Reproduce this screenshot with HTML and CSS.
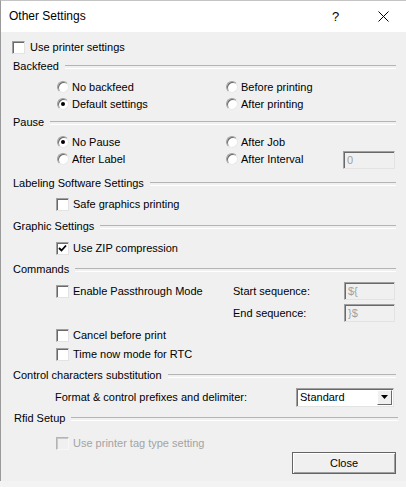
FILE: index.html
```html
<!DOCTYPE html>
<html lang="en">
    <head>
        <meta charset="UTF-8" />
        <title>Other Settings</title>
        <link rel="stylesheet" href="styles.css">
    </head>
    <body>
        <div class="window">
            <div class="titlebar">
                <span class="title">Other Settings</span>
                <span class="help">?</span>
                <svg class="close-x" width="11" height="11" viewBox="0 0 11 11">
                    <path d="M0.5 0.5 L10.5 10.5 M10.5 0.5 L0.5 10.5" stroke="#000" stroke-width="1" fill="none" />
                </svg>
            </div>
            <div class="content">
                <div class="check top-check"><span class="box"></span>Use printer settings</div>

                <div class="section mt1">Backfeed</div>
                <div class="radio-grid mt3">
                    <div class="opt"><span class="radio"></span>No backfeed</div>
                    <div class="opt"><span class="radio"></span>Before printing</div>
                    <div class="opt"><span class="radio on"></span>Default settings</div>
                    <div class="opt"><span class="radio"></span>After printing</div>
                </div>

                <div class="section mt1">Pause</div>
                <div class="radio-grid pause mt2">
                    <div class="opt"><span class="radio on"></span>No Pause</div>
                    <div class="opt"><span class="radio"></span>After Job</div>
                    <div></div>
                    <div class="opt"><span class="radio"></span>After Label</div>
                    <div class="opt"><span class="radio"></span>After Interval</div>
                    <div class="field">0</div>
                </div>

                <div class="section mt7">Labeling Software Settings</div>
                <div class="check indent mt3"><span class="box"></span>Safe graphics printing</div>

                <div class="section mt4">Graphic Settings</div>
                <div class="check indent mt4"><span class="box checked">
                    <svg width="9" height="9" viewBox="0 0 9 9"><path d="M1 4 L3.5 6.5 L8 1.5" stroke="#000" stroke-width="1.8" fill="none" /></svg>
                </span>Use ZIP compression</div>

                <div class="section mt3">Commands</div>
                <div class="cmd-grid mt4">
                    <div class="check"><span class="box"></span>Enable Passthrough Mode</div>
                    <div class="seq-label">Start sequence:</div>
                    <div class="field">${</div>
                    <div></div>
                    <div class="seq-label">End sequence:</div>
                    <div class="field">}$</div>
                </div>
                <div class="check indent mt4"><span class="box"></span>Cancel before print</div>
                <div class="check indent mt1"><span class="box"></span>Time now mode for RTC</div>

                <div class="section mt3">Control characters substitution</div>
                <div class="format-row mt4">
                    <span>Format &amp; control prefixes and delimiter:</span>
                    <div class="select">
                        <span class="select-value">Standard</span>
                        <span class="select-btn">
                            <svg width="7" height="4" viewBox="0 0 7 4"><path d="M0 0 H7 L3.5 4 Z" fill="#000" /></svg>
                        </span>
                    </div>
                </div>

                <div class="section rfid mt3">Rfid Setup</div>
                <div class="check indent disabled mt7"><span class="box"></span>Use printer tag type setting</div>

                <div class="footer">
                    <button class="btn">Close</button>
                </div>
            </div>
        </div>
    </body>
</html>
```

FILE: styles.css
```css
* {
    box-sizing: border-box;
}
html, body {
    margin: 0;
    padding: 0;
}
body {
    width: 406px;
    height: 487px;
    overflow: hidden;
    background: linear-gradient(#d9d9d9, #f3f3f3 5px);
    font-family: "Liberation Sans", Arial, sans-serif;
    font-size: 11px;
    color: #000;
}
.window {
    width: 406px;
    height: 481px;
    display: flex;
    flex-direction: column;
    border-left: 1px solid #9a9a9a;
    border-top: 1px solid #c4c4c4;
    background-color: #f0f0f0;
}
.titlebar {
    height: 31px;
    flex-shrink: 0;
    display: flex;
    align-items: center;
    padding-left: 8px;
    background-color: #fff;
}
.title {
    font-size: 12px;
    flex: 1;
    padding-bottom: 1px;
}
.help {
    font-size: 13px;
    width: 46px;
    padding-bottom: 1px;
}
.close-x {
    margin-right: 17px;
}
.content {
    flex: 1;
    padding: 6px 10px 0 11px;
    display: flex;
    flex-direction: column;
}
.mt1 { margin-top: 1px; }
.mt2 { margin-top: 2px; }
.mt3 { margin-top: 3px; }
.mt4 { margin-top: 4px; }
.mt7 { margin-top: 7px; }

.section {
    height: 18px;
    display: flex;
    align-items: center;
    gap: 6px;
    padding-left: 1px;
}
.section::after {
    content: "";
    flex: 1;
    height: 2px;
    border-top: 1px solid #b4b4b4;
    border-bottom: 1px solid #fff;
    margin-top: 1px;
}
.section.rfid {
    padding-left: 2px;
    margin-right: -2px;
}

.check, .opt {
    height: 18px;
    display: flex;
    align-items: center;
    white-space: nowrap;
}
.opt {
    height: 17px;
    padding-left: 1px;
}
.indent {
    margin-left: 44px;
}
.box {
    width: 13px;
    height: 13px;
    margin-right: 4px;
    flex-shrink: 0;
    display: flex;
    align-items: center;
    justify-content: center;
    background-color: #fff;
    border: 1px solid;
    border-color: #a0a0a0 #e3e3e3 #e3e3e3 #a0a0a0;
    box-shadow: inset 1px 1px 0 #696969;
}
.top-check .box {
    margin-right: 5px;
}
.disabled {
    color: #a3a3a3;
}
.disabled .box {
    background-color: #f0f0f0;
    border-color: #b4b4b4 #f7f7f7 #f7f7f7 #b4b4b4;
    box-shadow: inset 1px 1px 0 #c8c8c8;
}
.radio {
    position: relative;
    width: 12px;
    height: 12px;
    margin-right: 3px;
    flex-shrink: 0;
    border-radius: 50%;
    background-color: #fff;
    border: 1px solid;
    border-color: #a0a0a0 #e8e8e8 #e8e8e8 #a0a0a0;
    box-shadow: inset 1px 1px 0 #6a6a6a;
}
.radio.on::after {
    content: "";
    position: absolute;
    left: 3px;
    top: 3px;
    width: 4px;
    height: 4px;
    border-radius: 50%;
    background-color: #000;
}

.radio-grid {
    margin-left: 44px;
    display: grid;
    grid-template-columns: 169px 118px;
    grid-auto-rows: 17px;
}
.radio-grid.pause {
    grid-template-columns: 169px 118px 52px;
}
.field {
    height: 18px;
    padding: 2px 0 0 3px;
    color: #a0a0a0;
    background-color: #f0f0f0;
    border: 1px solid;
    border-color: #a0a0a0 #e3e3e3 #e3e3e3 #a0a0a0;
    box-shadow: inset 1px 1px 0 #696969;
}
.pause .field {
    margin-top: 1px;
}

.cmd-grid {
    margin-left: 44px;
    display: grid;
    grid-template-columns: 177px 111px 51px;
    row-gap: 4px;
}
.seq-label {
    height: 18px;
    line-height: 18px;
}

.format-row {
    height: 18px;
    margin-left: 43px;
    display: flex;
    align-items: center;
}
.format-row > span {
    width: 241px;
}
.select {
    width: 98px;
    height: 19px;
    display: flex;
    align-items: center;
    background-color: #fff;
    border: 1px solid;
    border-color: #a0a0a0 #e3e3e3 #e3e3e3 #a0a0a0;
    box-shadow: inset 1px 1px 0 #696969;
    padding: 1px 1px 1px 3px;
}
.select-value {
    flex: 1;
}
.select-btn {
    width: 15px;
    height: 15px;
    display: flex;
    align-items: center;
    justify-content: center;
    background-color: #f0f0f0;
    border: 1px solid;
    border-color: #fff #696969 #696969 #fff;
}

.footer {
    margin-top: 0;
    display: flex;
    justify-content: flex-end;
}
.btn {
    width: 104px;
    height: 22px;
    padding: 0;
    font-family: inherit;
    font-size: 11px;
    color: #000;
    background-color: #f0f0f0;
    border: 1px solid #646464;
    box-shadow: inset 1px 1px 0 #fff, inset -1px -1px 0 #a0a0a0;
}
```
